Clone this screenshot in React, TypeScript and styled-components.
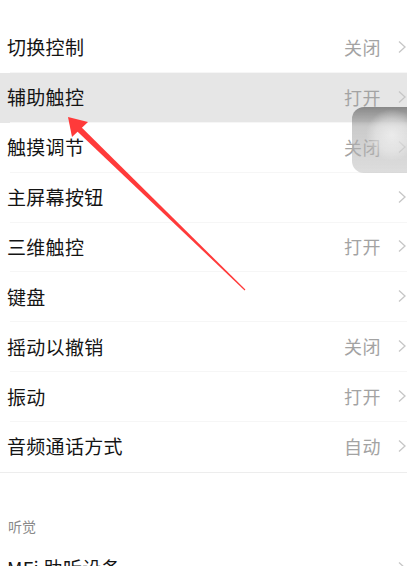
import React from "react";
import styled, { createGlobalStyle } from "styled-components";

const Global = createGlobalStyle`
  html, body { margin: 0; padding: 0; background: #ffffff; }
  body { width: 407px; height: 566px; overflow: hidden; font-family: "Noto Sans CJK SC", "Noto Sans", sans-serif; }
`;

const Page = styled.div`
  position: relative;
  width: 407px;
  height: 566px;
  overflow: hidden;
  background: #fff;
`;

const Group = styled.div`
  display: flex;
  flex-direction: column;
  padding-top: 23px;
  border-bottom: 1px solid #ededed;
`;

const Row = styled.div<{ $active?: boolean; $last?: boolean }>`
  position: relative;
  display: flex;
  align-items: center;
  height: 49.875px;
  padding-left: 7px;
  padding-bottom: 2px;
  box-sizing: border-box;
  background: ${(p) => (p.$active ? "#e6e6e6" : "#ffffff")};
  &::after {
    content: "";
    display: ${(p) => (p.$last ? "none" : "block")};
    position: absolute;
    left: 10px;
    right: 0;
    bottom: 0;
    height: 1px;
    background: #f6f6f6;
  }
`;

const Label = styled.span`
  flex: 1;
  font-size: 19px;
  color: #141414;
  letter-spacing: 0.3px;
`;

const Value = styled.span`
  font-size: 18px;
  color: #a3a3a3;
  margin-right: 16px;
  letter-spacing: 0.5px;
`;

const Chevron = styled.svg`
  width: 10px;
  height: 14px;
  flex: none;
`;

const Header = styled.div`
  padding: 39px 0 0 8px;
  margin-bottom: 4px;
  height: 28px;
  font-size: 14px;
  color: #8a8a8a;
  display: flex;
  align-items: center;
`;

const TouchButton = styled.div`
  position: absolute;
  left: 352px;
  top: 107px;
  width: 72px;
  height: 66px;
  border-radius: 12px;
  background:
    radial-gradient(circle at 40px 28px, rgba(255,255,255,0.6) 0, rgba(255,255,255,0.35) 16px, rgba(255,255,255,0) 26px),
    linear-gradient(180deg, rgba(120,120,120,0.85) 0%, rgba(170,170,170,0.62) 30%, rgba(188,188,188,0.5) 100%);
`;

const ArrowLayer = styled.svg`
  position: absolute;
  left: 0;
  top: 0;
  width: 407px;
  height: 566px;
  pointer-events: none;
`;

const ChevronIcon = () => (
  <Chevron viewBox="0 0 10 14">
    <path d="M2 1.5 L8 7 L2 12.5" fill="none" stroke="#c6c6c6" strokeWidth="1.3" />
  </Chevron>
);

type Item = { label: string; value?: string; active?: boolean };

const items: Item[] = [
  { label: "切换控制", value: "关闭" },
  { label: "辅助触控", value: "打开", active: true },
  { label: "触摸调节", value: "关闭" },
  { label: "主屏幕按钮" },
  { label: "三维触控", value: "打开" },
  { label: "键盘" },
  { label: "摇动以撤销", value: "关闭" },
  { label: "振动", value: "打开" },
  { label: "音频通话方式", value: "自动" },
];

export default function App() {
  return (
    <Page>
      <Global />
      <Group>
        {items.map((it, i) => (
          <Row key={it.label} $active={it.active} $last={i === items.length - 1}>
            <Label>{it.label}</Label>
            {it.value && <Value>{it.value}</Value>}
            <ChevronIcon />
          </Row>
        ))}
      </Group>
      <Header>听觉</Header>
      <Row $last>
        <Label>MFi 助听设备</Label>
        <ChevronIcon />
      </Row>
      <TouchButton />
      <ArrowLayer viewBox="0 0 407 566">
        <polygon points="68,117 72,137 88,122" fill="#ff3a3a" />
        <polygon points="80.2,126 245.4,289.6 244.6,290.4 75.8,130" fill="#ff3a3a" />
      </ArrowLayer>
    </Page>
  );
}
